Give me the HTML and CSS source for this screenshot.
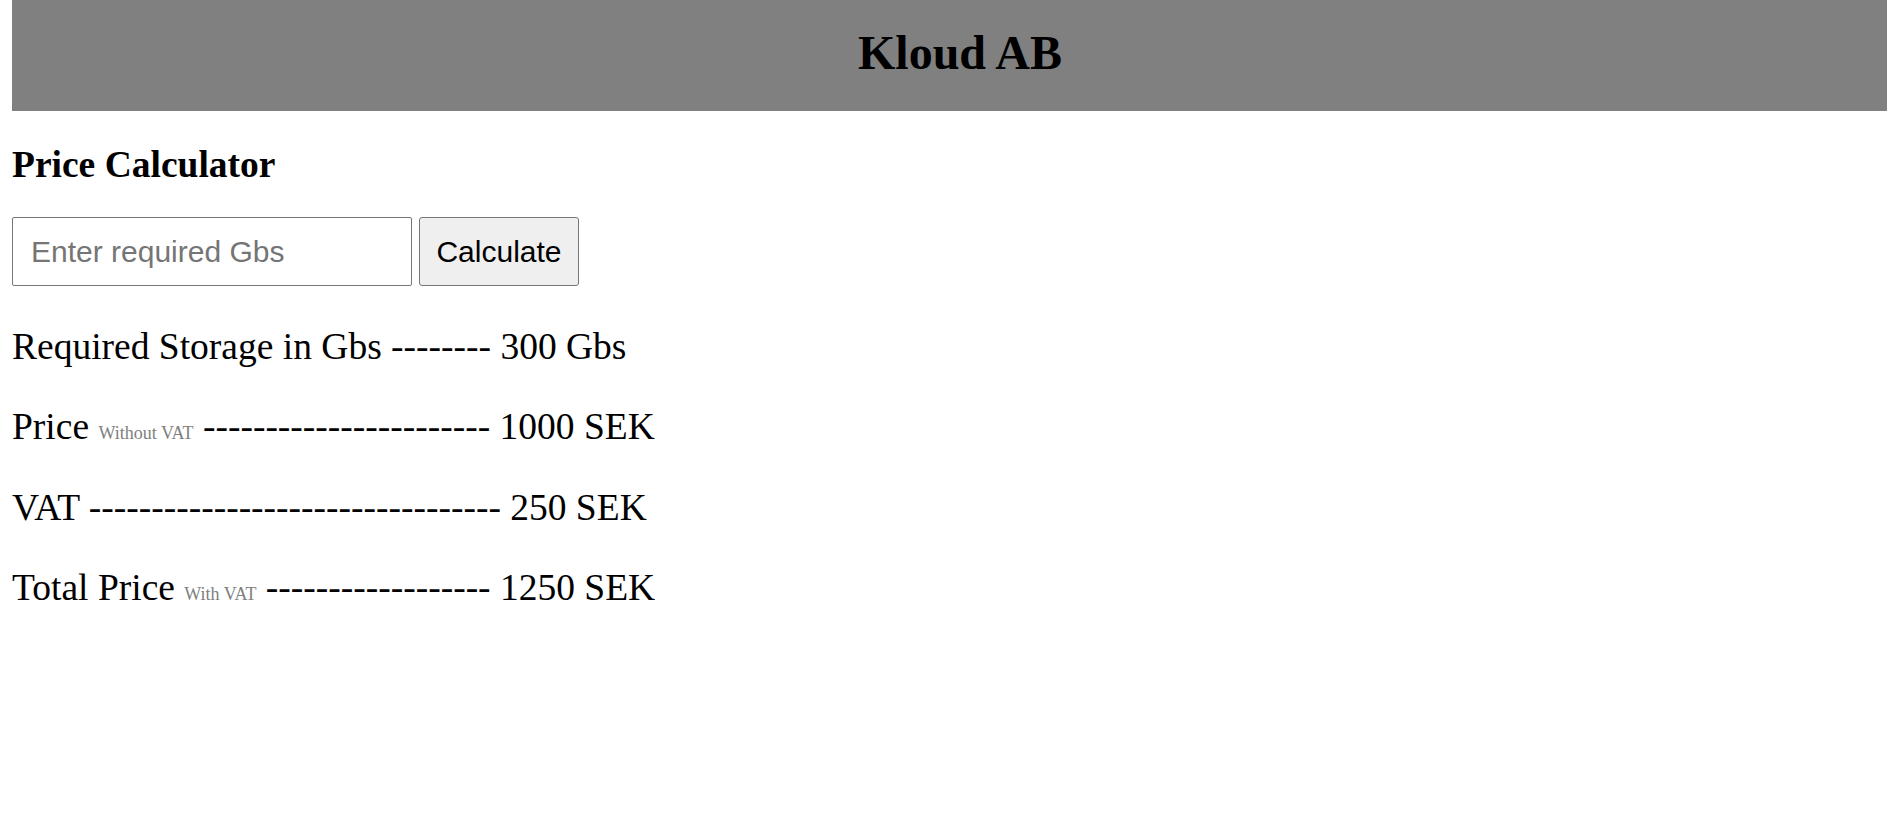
FILE: index.html
```html
<!DOCTYPE html>
<html lang="en">
<head>
<meta charset="utf-8">
<title>Kloud AB</title>
<link rel="stylesheet" href="styles.css">
</head>
<body>
<div class="page">
  <header class="header">
    <h1 class="brand">Kloud AB</h1>
  </header>
  <h2 class="title">Price Calculator</h2>
  <div class="form">
    <input class="field" type="text" placeholder="Enter required Gbs">
    <button class="btn" type="button">Calculate</button>
  </div>
  <p class="row">Required Storage in Gbs -------- 300 Gbs</p>
  <p class="row">Price <span class="note">Without VAT</span> ----------------------- 1000 SEK</p>
  <p class="row">VAT --------------------------------- 250 SEK</p>
  <p class="row">Total Price <span class="note">With VAT</span> ------------------ 1250 SEK</p>
</div>
</body>
</html>
```

FILE: styles.css
```css
html, body {
  margin: 0;
  padding: 0;
  background: #ffffff;
}

body {
  font-family: "Liberation Serif", "Times New Roman", serif;
  color: #000000;
}

.page {
  padding-left: 12px;
}

.header {
  background: #808080;
  height: 111px;
  box-sizing: border-box;
  padding: 25px 0 0 21px;
}

.brand {
  margin: 0;
  font-size: 48px;
  font-weight: bold;
  text-align: center;
  line-height: normal;
}

.title {
  margin: 32px 0 31px 0;
  font-size: 37.5px;
  font-weight: bold;
  line-height: normal;
}

.form {
  display: flex;
  gap: 7px;
  align-items: stretch;
}

.field {
  box-sizing: border-box;
  width: 400px;
  height: 69px;
  margin: 0;
  padding: 0 18px;
  border: 1px solid #767676;
  border-radius: 2px;
  font-family: "Liberation Sans", Arial, sans-serif;
  font-size: 30px;
  color: #000000;
  background: #ffffff;
  outline: none;
}

.field::placeholder {
  color: #757575;
}

.btn {
  box-sizing: border-box;
  width: 160px;
  height: 69px;
  margin: 0;
  padding: 0;
  border: 1px solid #767676;
  border-radius: 3px;
  background: #efefef;
  font-family: "Liberation Sans", Arial, sans-serif;
  font-size: 30px;
  color: #000000;
}

.row {
  margin: 38.5px 0 0 0;
  font-size: 37.5px;
  line-height: normal;
  white-space: nowrap;
}

.row + .row {
  margin-top: 37.6px;
}

.note {
  font-size: 18px;
  color: #808080;
}
```
